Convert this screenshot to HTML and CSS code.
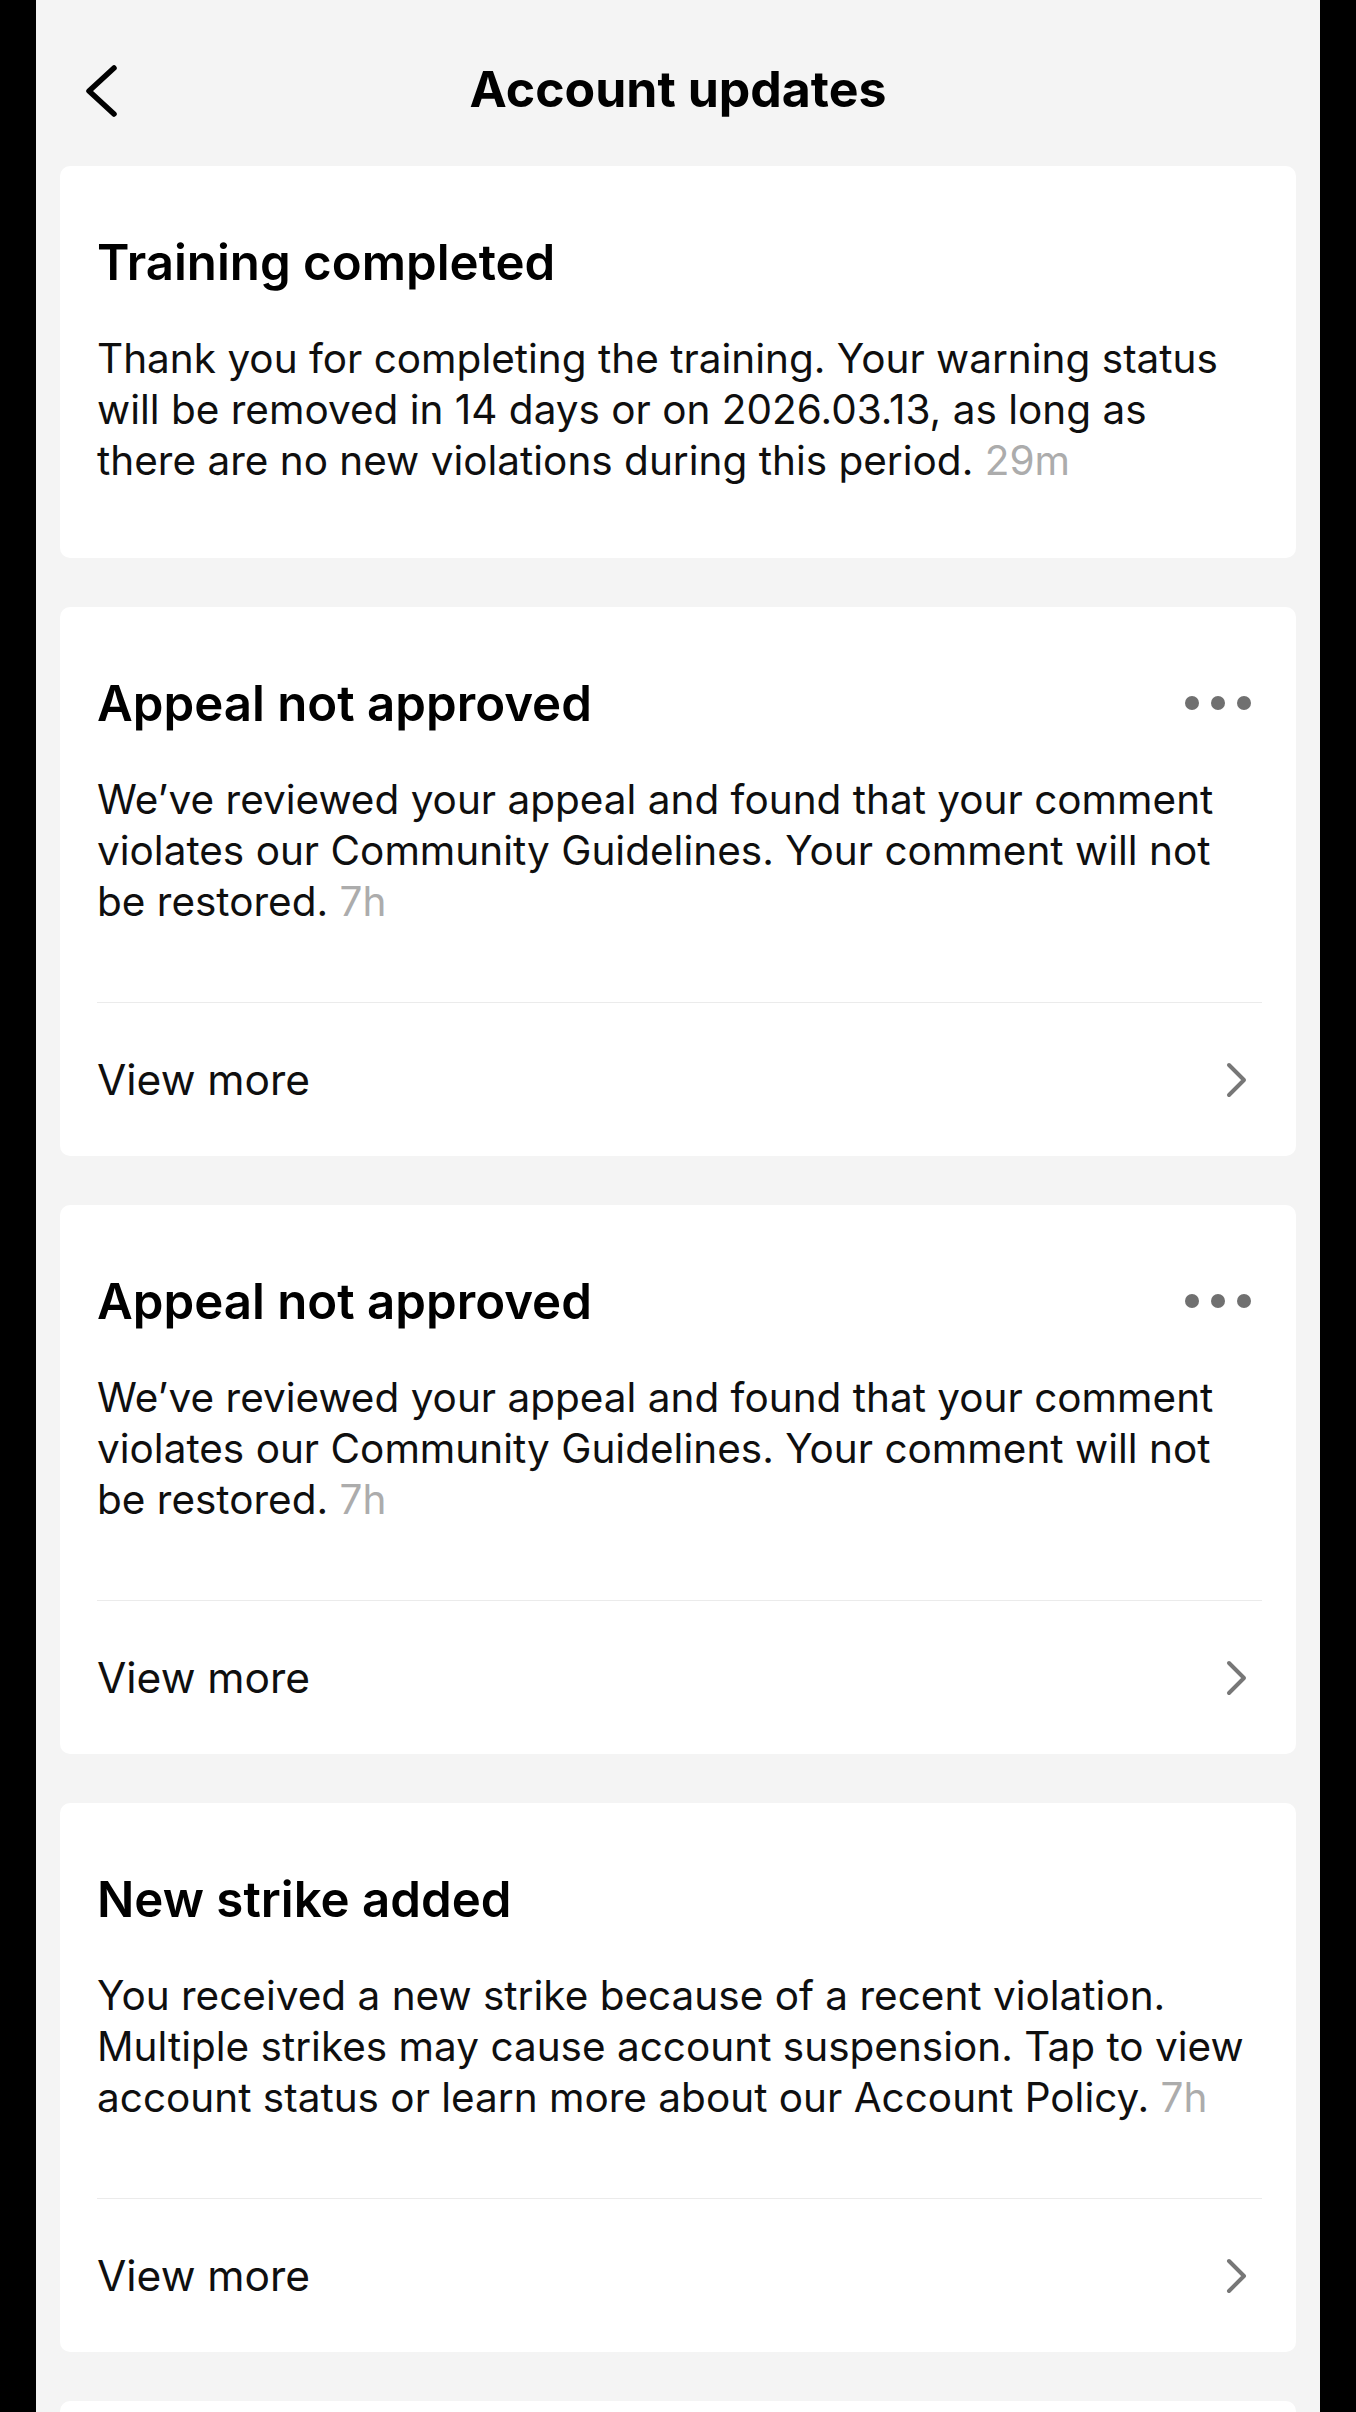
FILE: index.html
```html
<!DOCTYPE html>
<html>
<head>
    <meta charset="utf-8">
    <meta name="viewport" content="width=device-width, initial-scale=1">
    <title>Account updates</title>
    <link rel="stylesheet" href="styles.css">
</head>
<body>
    <div class="screen">
        <header class="topbar">
            <a class="back" href="#">
                <svg width="40" height="60" viewBox="0 0 40 60"><path d="M32 7 L7 30 L32 53" fill="none" stroke="#000" stroke-width="5.5" stroke-linecap="round" stroke-linejoin="round"/></svg>
            </a>
            <h1>Account updates</h1>
            <span></span>
        </header>

        <div class="card">
            <div class="card-main card-main-only">
                <div class="card-head">
                    <h2>Training completed</h2>
                </div>
                <p class="text">Thank you for completing the training. Your warning status will be removed in 14 days or on 2026.03.13, as long as there are no new violations during this period. <span class="time">29m</span></p>
            </div>
        </div>

        <div class="card">
            <div class="card-main">
                <div class="card-head">
                    <h2>Appeal not approved</h2>
                    <button class="more"><span></span><span></span><span></span></button>
                </div>
                <p class="text">We’ve reviewed your appeal and found that your comment violates our Community Guidelines. Your comment will not be restored. <span class="time">7h</span></p>
            </div>
            <a class="card-foot" href="#">
                <span>View more</span>
                <svg width="24" height="40" viewBox="0 0 24 40"><path d="M4 5 L19 20 L4 35" fill="none" stroke="#777" stroke-width="4" stroke-linecap="round" stroke-linejoin="round"/></svg>
            </a>
        </div>

        <div class="card">
            <div class="card-main">
                <div class="card-head">
                    <h2>Appeal not approved</h2>
                    <button class="more"><span></span><span></span><span></span></button>
                </div>
                <p class="text">We’ve reviewed your appeal and found that your comment violates our Community Guidelines. Your comment will not be restored. <span class="time">7h</span></p>
            </div>
            <a class="card-foot" href="#">
                <span>View more</span>
                <svg width="24" height="40" viewBox="0 0 24 40"><path d="M4 5 L19 20 L4 35" fill="none" stroke="#777" stroke-width="4" stroke-linecap="round" stroke-linejoin="round"/></svg>
            </a>
        </div>

        <div class="card">
            <div class="card-main">
                <div class="card-head">
                    <h2>New strike added</h2>
                </div>
                <p class="text">You received a new strike because of a recent violation. Multiple strikes may cause account suspension. Tap to view account status or learn more about our Account Policy. <span class="time">7h</span></p>
            </div>
            <a class="card-foot" href="#">
                <span>View more</span>
                <svg width="24" height="40" viewBox="0 0 24 40"><path d="M4 5 L19 20 L4 35" fill="none" stroke="#777" stroke-width="4" stroke-linecap="round" stroke-linejoin="round"/></svg>
            </a>
        </div>

        <div class="card card-cut"></div>
    </div>
</body>
</html>
```

FILE: styles.css
```css
body {
    margin: 0;
    background-color: #000;
    font-family: Inter, "Noto Sans", sans-serif;
    color: #0f0f0f;
}
.screen {
    width: 1284px;
    height: 2412px;
    margin: 0 auto;
    background-color: #f4f4f4;
    overflow: hidden;
}
.topbar {
    height: 166px;
    box-sizing: border-box;
    padding-top: 12px;
    display: grid;
    grid-template-columns: 1fr auto 1fr;
    align-items: center;
}
.back {
    margin-left: 46px;
    margin-top: 4px;
    display: flex;
}
h1 {
    margin: 0;
    font-size: 50px;
    line-height: 60px;
    font-weight: 700;
    color: #000;
}
.card {
    background-color: #fff;
    border-radius: 10px;
    margin: 0 24px 49px;
}
.card-main {
    padding: 66px 34px 75px 37px;
}
.card-main-only {
    padding-bottom: 72px;
}
.card-head {
    display: flex;
    align-items: center;
    justify-content: space-between;
}
h2 {
    margin: 0;
    font-size: 49.2px;
    line-height: 60px;
    font-weight: 600;
    color: #000;
}
.more {
    display: flex;
    gap: 12px;
    margin-right: 11px;
    padding: 0;
    border: none;
    background: none;
}
.more span {
    width: 14px;
    height: 14px;
    border-radius: 50%;
    background-color: #707070;
}
.text {
    margin: 41px 0 0;
    padding-right: 12px;
    font-size: 40.5px;
    line-height: 51px;
}
.time {
    color: #acacac;
}
.card-foot {
    height: 154px;
    box-sizing: border-box;
    margin: 0 34px 0 37px;
    border-top: 1px solid #ebebeb;
    display: flex;
    align-items: center;
    justify-content: space-between;
    font-size: 42.5px;
    line-height: 60px;
    color: #0f0f0f;
    text-decoration: none;
}
.card-foot svg {
    margin-right: 13px;
}
.card-cut {
    height: 200px;
}
```
